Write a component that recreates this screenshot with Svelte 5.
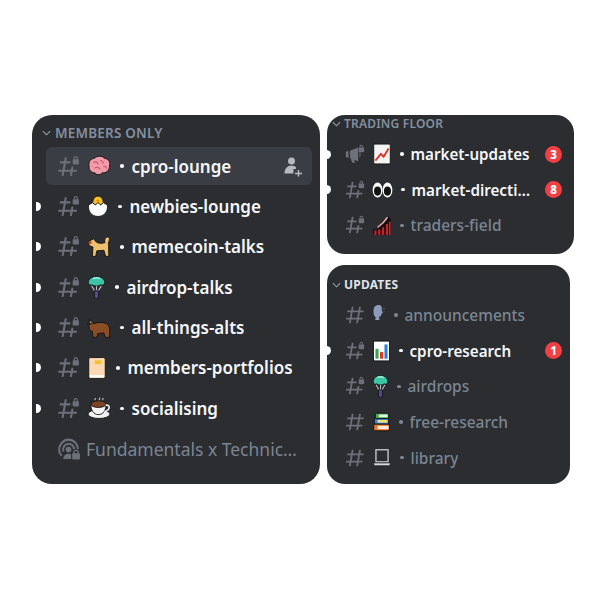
<script>
  const left = [
    { e: 'brain', w: 22, n: 'cpro-lounge', on: true, sel: true },
    { e: 'chick', w: 20, n: 'newbies-lounge', on: true, pip: true },
    { e: 'dog', w: 22, n: 'memecoin-talks', on: true, pip: true },
    { e: 'chute', w: 17, n: 'airdrop-talks', on: true, pip: true },
    { e: 'bull', w: 22, n: 'all-things-alts', on: true, pip: true },
    { e: 'book', w: 18, n: 'members-portfolios', on: true, pip: true },
    { e: 'coffee', w: 22, n: 'socialising', on: true, pip: true }
  ];
  const top = [
    { e: 'up', w: 18, n: 'market-updates', on: true, pip: true, icon: 'mega', badge: 3 },
    { e: 'eyes', w: 19, n: 'market-direction', on: true, pip: true, badge: 8 },
    { e: 'traders', w: 18, n: 'traders-field' }
  ];
  const bottom = [
    { e: 'head', w: 12, n: 'announcements', icon: 'plain' },
    { e: 'bars', w: 17, n: 'cpro-research', on: true, pip: true, badge: 1 },
    { e: 'chute', w: 15, n: 'airdrops' },
    { e: 'books', w: 17, n: 'free-research', icon: 'plain' },
    { e: 'laptop', w: 18, n: 'library', icon: 'plain' }
  ];
  const hash = 'M5.88657 21C5.57547 21 5.3399 20.7189 5.39427 20.4126L6.00001 17H2.59511C2.28449 17 2.04905 16.7198 2.10259 16.4138L2.27759 15.4138C2.31946 15.1746 2.52722 15 2.77011 15H6.35001L7.41001 9H4.00511C3.69449 9 3.45905 8.71977 3.51259 8.41381L3.68759 7.41381C3.72946 7.17456 3.93722 7 4.18011 7H7.76001L8.39677 3.41262C8.43914 3.17391 8.64664 3 8.88907 3H9.87344C10.1845 3 10.4201 3.28107 10.3657 3.58738L9.76001 7H15.76L16.3968 3.41262C16.4391 3.17391 16.6466 3 16.8891 3H17.8734C18.1845 3 18.4201 3.28107 18.3657 3.58738L17.76 7H21.1649C21.4755 7 21.711 7.28023 21.6574 7.58619L21.4824 8.58619C21.4406 8.82544 21.2328 9 20.9899 9H17.41L16.35 15H19.7549C20.0655 15 20.301 15.2802 20.2474 15.5862L20.0724 16.5862C20.0306 16.8254 19.8228 17 19.5799 17H16L15.3632 20.5874C15.3209 20.8261 15.1134 21 14.8709 21H13.8866C13.5755 21 13.3399 20.7189 13.3943 20.4126L14 17H8.00001L7.36325 20.5874C7.32088 20.8261 7.11337 21 6.87094 21H5.88657ZM9.41045 9L8.35045 15H14.3504L15.4104 9H9.41045Z';
  const hashLock = 'M14 8C14 7.44772 13.5523 7 13 7H9.76001L10.3657 3.58738C10.4201 3.28107 10.1845 3 9.87344 3H8.88907C8.64664 3 8.43914 3.17391 8.39677 3.41262L7.76001 7H4.18011C3.93722 7 3.72946 7.17456 3.68759 7.41381L3.51259 8.41381C3.45905 8.71977 3.69449 9 4.00511 9H7.41001L6.35001 15H2.77011C2.52722 15 2.31946 15.1746 2.27759 15.4138L2.10259 16.4138C2.04905 16.7198 2.28449 17 2.59511 17H6.00001L5.39427 20.4126C5.3399 20.7189 5.57547 21 5.88657 21H6.87094C7.11337 21 7.32088 20.8261 7.36325 20.5874L8.00001 17H14L13.3943 20.4126C13.3399 20.7189 13.5755 21 13.8866 21H14.8709C15.1134 21 15.3209 20.8261 15.3632 20.5874L16 17H19.5799C19.8228 17 20.0306 16.8254 20.0724 16.5862L20.2474 15.5862C20.301 15.2802 20.0655 15 19.7549 15H16.35L16.6758 13.1558C16.7823 12.5529 16.3186 12 15.7063 12C15.2286 12 14.8199 12.3429 14.7368 12.8133L14.3504 15H8.35045L9.41045 9H13C13.5523 9 14 8.55228 14 8Z';
  const lock = 'M21.025 5V4C21.025 2.88 20.05 2 19 2C17.95 2 17 2.88 17 4V5C16.4477 5 16 5.44772 16 6V9C16 9.55228 16.4477 10 17 10H21C21.5523 10 22 9.55228 22 9V5.975C22 5.43652 21.5635 5 21.025 5ZM20 5H18V4C18 3.42857 18.4667 3 19 3C19.5333 3 20 3.42857 20 4V5Z';
</script>

{#snippet emoji(name, w)}
  <svg class="emoji" width={w} height="22" viewBox="1 1 {w - 2} 20" aria-hidden="true">
    {#if name === 'brain'}
      <path d="M2 11C1 7 4 4 7 4C9 1.500 14 1.500 16 4C20 4.500 21.500 8 20.500 11C21 15 17 18 14 17C12 20 8 19 7 17C4 17.500 1.500 14 2 11Z" fill="#f39aa8" stroke="#111" stroke-width="0.800"/>
      <path d="M6 8C8 6.500 10 7.500 10 9.500M12 6C14 6 15 7.500 14.500 9M7 13C9 11.500 11 12 12 14M15 11.500C16.500 11 18 12 18 13.500" fill="none" stroke="#c9586e" stroke-width="1.100"/>
    {:else if name === 'chick'}
      <path d="M5 10C5 5 7 2 10 2C13 2 15 5 15 10Z" fill="#f5bf2a" stroke="#111" stroke-width="0.800"/>
      <path d="M8.500 5.500L10 8L11.500 5.500Z" fill="#e8801c"/>
      <path d="M1.500 10L5 8L7.500 10L10 8L12.500 10L15 8L18.500 10C19.500 16 15.500 20.500 10 20.500C4.500 20.500 0.500 16 1.500 10Z" fill="#fdfdfd" stroke="#111" stroke-width="0.800"/>
    {:else if name === 'dog'}
      <path d="M1.500 6L6 3.500L8.500 6.500C11 8 14 8 16.500 7C15.500 4 17 1.500 19.500 2C21.500 3 20 5.500 19.500 7.500C20 10 19.500 14 20 19.500L17 19.500L15.500 14L9 14.500L8 19.500L5 19.500L5.500 11C3 10.500 1 9 1.500 6Z" fill="#eebf6d" stroke="#111" stroke-width="0.800"/>
      <circle cx="3" cy="7" r="1.300" fill="#d0342c"/>
    {:else if name === 'chute'}
      <path d="M1 7C1 3.500 4.500 1.500 8.500 1.500C12.500 1.500 16 3.500 16 7C16 9 13.500 10 12.500 9C11 10.500 6 10.500 4.500 9C3.500 10 1 9 1 7Z" transform="scale({w / 17} 1)" fill="#3cc4a4" stroke="#111" stroke-width="0.800"/>
      <path d="M5 3.500C7 2.500 10 2.500 12 3.500" transform="scale({w / 17} 1)" fill="none" stroke="#a6ecd8" stroke-width="1.200"/>
      <path d="M4 10L8.500 17M13 10L8.500 17M8.500 10V17" transform="scale({w / 17} 1)" fill="none" stroke="#b9bcc4" stroke-width="1"/>
      <path d="M6.500 14.500H10.500V20.500L8.500 21.500L6.500 20.500Z" transform="scale({w / 17} 1)" fill="#5a4a8c" stroke="#111" stroke-width="0.800"/>
    {:else if name === 'bull'}
      <path d="M0.500 7L3 8C4 6 6 6.500 7 7C11 5 17 6 19 8C21 10 21 14 20.500 19.500L16.500 19.500L15.500 15.500L10 16L9 19.500L5.500 19.500L5 14C3 14 1.500 12 2 10Z" fill="#8a4d25" stroke="#111" stroke-width="0.800"/>
      <path d="M3 7L2 3.500L5 6" fill="#e6c37a" stroke="#111" stroke-width="0.800"/>
    {:else if name === 'book'}
      <rect x="1.500" y="1.500" width="15" height="19" rx="1.500" fill="#fbd9b4" stroke="#111" stroke-width="0.800"/>
      <rect x="7" y="4" width="6" height="3.500" fill="#f3c02c"/>
      <rect x="2.500" y="17.500" width="13" height="2" fill="#ffffff"/>
    {:else if name === 'coffee'}
      <ellipse cx="11" cy="16.500" rx="10" ry="4" fill="#f2f2f2" stroke="#111" stroke-width="0.800"/>
      <path d="M3.500 7H17.500C17.500 13 15 17 10.500 17C6 17 3.500 13 3.500 7Z" fill="#f5f5f5" stroke="#111" stroke-width="0.800"/>
      <ellipse cx="10.500" cy="7.500" rx="7" ry="3" fill="#7c4325" stroke="#111" stroke-width="0.800"/>
      <path d="M17 8.500C21.500 7.500 21.500 13 16 14" fill="none" stroke="#eee" stroke-width="1.500"/>
      <path d="M7 4L8 2M11 4L12 1.500M14 4L15 2" stroke="#bbb" stroke-width="1"/>
    {:else if name === 'up'}
      <rect x="1.500" y="2" width="15" height="18" rx="1" fill="#f4f4f4" stroke="#111" stroke-width="0.800"/>
      <path d="M3 17L8 11L10.500 13.500L15 6" fill="none" stroke="#e0352b" stroke-width="1.700"/>
    {:else if name === 'eyes'}
      <ellipse cx="5" cy="11" rx="4.500" ry="6.800" fill="#fff"/>
      <ellipse cx="14" cy="11" rx="4.500" ry="6.800" fill="#fff"/>
      <ellipse cx="5" cy="12" rx="3.200" ry="4.200" fill="#111"/>
      <ellipse cx="14" cy="12" rx="3.200" ry="4.200" fill="#111"/>
    {:else if name === 'traders'}
      <path d="M1 14C4 17 7 13 9 11L13 7L15 3L17 6V20H1Z" fill="#111"/>
      <path d="M2 16H4V20H2ZM5.500 15H7.500V20H5.500ZM9 13H11V20H9ZM12.500 10H14.500V20H12.500ZM15.200 8H16.800V20H15.200Z" fill="#c8202a"/>
      <path d="M5 13L10 9L14 4" fill="none" stroke="#f2a8b0" stroke-width="1.300"/>
    {:else if name === 'head'}
      <path d="M1 8C1 3.500 3 2 6 2C8 2 9 4 8.600 7L9.500 9.500L8 10V12L6 12.500L6.500 15.500H2.500L3 13C1.500 12 1 10 1 8Z" fill="#8b9bb8"/>
      <path d="M10 5H11M10 8H11" stroke="#60687a" stroke-width="1"/>
    {:else if name === 'bars'}
      <rect x="1.200" y="2" width="14.600" height="18" fill="#fff" stroke="#111" stroke-width="0.800"/>
      <rect x="3" y="9" width="2.800" height="9" fill="#37a84a"/>
      <rect x="7.100" y="12" width="2.800" height="6" fill="#e0352b"/>
      <rect x="11.200" y="5" width="2.800" height="13" fill="#2f7fd6"/>
    {:else if name === 'books'}
      <rect x="3" y="3" width="12" height="5" rx="1" fill="#3eb049" stroke="#111" stroke-width="0.800"/>
      <rect x="6" y="4.200" width="8" height="2.400" fill="#e8f5e8"/>
      <rect x="2" y="8" width="13" height="5" rx="1" fill="#3d86dc" stroke="#111" stroke-width="0.800"/>
      <rect x="5" y="9.200" width="9" height="2.400" fill="#f6e27a"/>
      <rect x="1.500" y="13" width="14" height="6" rx="1" fill="#ee7a2c" stroke="#111" stroke-width="0.800"/>
      <rect x="5" y="14.500" width="10" height="3" fill="#fbe9dd"/>
    {:else if name === 'laptop'}
      <rect x="3.500" y="3.500" width="11" height="11" fill="#2b2d31" stroke="#c9ccd1" stroke-width="1.200"/>
      <path d="M1.200 15.500H16.800L16 18H2Z" fill="#d6d8dc" stroke="#111" stroke-width="0.600"/>
    {/if}
  </svg>
{/snippet}

{#snippet row(r)}
  <div class="row" class:sel={r.sel} class:on={r.on}>
    {#if r.pip}<span class="pip"></span>{/if}
    {#if r.icon === 'mega'}
      <svg class="ch" viewBox="0 0 24 24" aria-hidden="true">
        <path d="M2 10.500C2 9.700 2.600 9 3.500 9H5V16H3.500C2.600 16 2 15.300 2 14.500Z" fill="currentColor"/>
        <path d="M6.500 8.500L15.500 5V20L6.500 16.500ZM7.500 17.500H11L12 21.500H9Z" fill="currentColor"/>
        <path d="M17 9.500C18.500 10.500 18.500 14.500 17 15.500Z" fill="currentColor"/>
        <path d={lock} fill="currentColor"/>
      </svg>
    {:else if r.icon === 'plain'}
      <svg class="ch" viewBox="0 0 24 24" aria-hidden="true"><path d={hash} fill="currentColor"/></svg>
    {:else}
      <svg class="ch" viewBox="0 0 24 24" aria-hidden="true"><path d={hashLock} fill="currentColor"/><path d={lock} fill="currentColor"/></svg>
    {/if}
    {@render emoji(r.e, r.w)}
    <span class="dot"></span>
    <span class="name">{r.n}</span>
    {#if r.sel}
      <svg class="invite" viewBox="0 0 20 20" aria-hidden="true">
        <circle cx="8.500" cy="4.500" r="3.500" fill="currentColor"/>
        <path d="M1.500 17C1.500 12 4.500 9 8.500 9C10.500 9 12 9.700 13 10.800V12.500H10.500V17Z" fill="currentColor"/>
        <path d="M12 17H19M15.500 13.500V20" stroke="currentColor" stroke-width="1.500"/>
      </svg>
    {/if}
    {#if r.badge}<span class="badge">{r.badge}</span>{/if}
  </div>
{/snippet}

{#snippet chev()}
  <svg class="chev" viewBox="0 0 10 6" aria-hidden="true"><path d="M1 1L5 5L9 1" fill="none" stroke="currentColor" stroke-width="1.200"/></svg>
{/snippet}

<main class="stage">
  <section class="card big">
    <h2 class="head">{@render chev()}MEMBERS ONLY</h2>
    <div class="list">
      {#each left as r}{@render row(r)}{/each}
      <div class="row stagech">
        <svg class="ch" viewBox="0 0 24 24" aria-hidden="true">
          <path d="M3 13.500C3 8 7 3.500 12 3.500C17 3.500 21 8 21 12.500M5.500 19C4 17.500 3 15.500 3 13.500" fill="none" stroke="currentColor" stroke-width="2"/>
          <path d="M7 15C6 10.500 9 7.500 12 7.500C15 7.500 17.500 10 17.300 12.500" fill="none" stroke="currentColor" stroke-width="2"/>
          <circle cx="12" cy="13" r="2.700" fill="currentColor"/>
          <path d="M7 22C7 18.500 9.500 17 12 17C13 17 13.800 17.200 14.500 17.500V22Z" fill="currentColor"/>
          <rect x="15.500" y="16.500" width="7.500" height="6" rx="1" fill="currentColor"/>
          <path d="M17.200 17V15.500C17.200 13.300 21.300 13.300 21.300 15.500V17" fill="none" stroke="currentColor" stroke-width="1.200"/>
        </svg>
        <span class="name">Fundamentals x Technicals</span>
      </div>
    </div>
  </section>
  <div class="side">
    <section class="card small trading">
      <h2 class="head">{@render chev()}TRADING FLOOR</h2>
      <div class="list">{#each top as r}{@render row(r)}{/each}</div>
    </section>
    <section class="card small updates">
      <h2 class="head bright">{@render chev()}UPDATES</h2>
      <div class="list">{#each bottom as r}{@render row(r)}{/each}</div>
    </section>
  </div>
</main>

<style>
  :global(body) { margin: 0; background: #fff; }
  .stage {
    width: 600px; height: 600px; box-sizing: border-box;
    padding: 115px 0 0 32px;
    display: flex; gap: 7px; align-items: flex-start;
    font-family: "Noto Sans", "Open Sans", sans-serif;
  }
  .side { display: flex; flex-direction: column; gap: 11px; }
  .card { background: #2b2d31; color: #7c8592; overflow: hidden; box-sizing: border-box; }
  .big { width: 288px; height: 369px; border-radius: 20px; padding: 9px 8px 0 14px; }
  .small { border-radius: 18px; }
  .trading { width: 247px; height: 139px; }
  .updates { width: 243px; height: 219px; padding-top: 11px; }
  .head {
    margin: 0; display: flex; align-items: center; gap: 4px;
    font-size: 13.500px; font-weight: 600; letter-spacing: .2px;
    color: #8490a0; height: 17px;
  }
  .big .head { margin-left: -4px; }
  .small .head { font-size: 12px; padding-left: 5px; gap: 3px; }
  .head.bright { color: #dfe3ea; font-weight: 700; }
  .chev { width: 9px; height: 6px; color: #99a0aa; flex: none; }
  .list { display: flex; flex-direction: column; gap: 2.400px; margin-top: 6px; }
  .small .list { gap: 1.650px; margin-top: 5px; }
  .row {
    position: relative; display: flex; align-items: center;
    height: 38px; border-radius: 6px; box-sizing: border-box;
    padding-left: 10px; font-size: 17.500px; font-weight: 400; color: #7c8592;
  }
  .small .row { height: 34px; padding-left: 17px; font-size: 15.500px; font-weight: 500; }
  .row.on { color: #f5f7fa; font-weight: 600; font-size: 17px; }
  .small .row.on { font-size: 15.200px; }
  .row.sel { background: #3b3d44; }
  .ch { width: 25px; height: 25px; flex: none; color: #6d7079; margin-right: 7px; }
  .small .ch { width: 22px; height: 22px; margin-right: 7px; }
  .emoji { flex: none; display: block; overflow: visible; }
  .dot {
    width: 3.500px; height: 3.500px; border-radius: 50%;
    background: currentColor; flex: none; margin: 0 8px 0 10px;
  }
  .small .dot { margin: 0 7px 0 9px; }
  .name { white-space: nowrap; overflow: hidden; text-overflow: ellipsis; min-width: 0; }
  .pip {
    position: absolute; left: -10px; top: 50%;
    width: 5px; height: 9px; margin-top: -4.500px;
    background: #fff; border-radius: 0 5px 5px 0;
  }
  .small .pip { left: -1px; }
  .invite { width: 20px; height: 21px; color: #b5bac1; flex: none; margin-left: auto; margin-right: 9px; }
  .badge {
    position: absolute; right: 12px; top: 50%; margin-top: -8.500px;
    width: 17px; height: 17px; border-radius: 50%;
    background: #f23f42; color: #fff;
    font-size: 11.500px; font-weight: 800; line-height: 17px; text-align: center;
  }
  .updates .badge { right: 8px; }
  .small .name { max-width: 122px; }
  .stagech .ch { margin-right: 5px; }
  .stagech .name { max-width: 211px; }
</style>
